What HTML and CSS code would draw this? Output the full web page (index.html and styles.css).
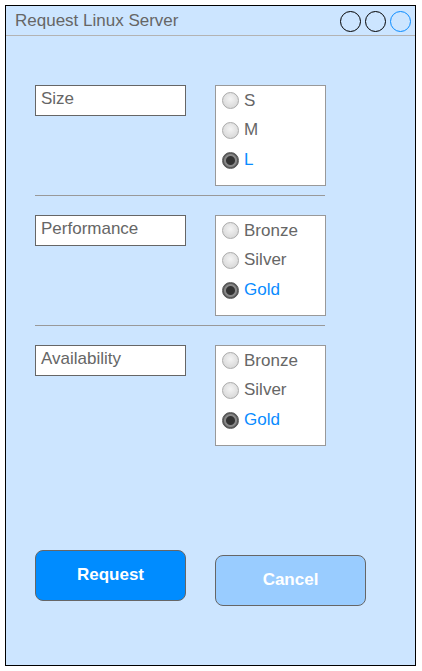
FILE: index.html
```html
<!DOCTYPE html>
<html lang="en">
<head>
	<meta charset="UTF-8">
	<title>Request Linux Server</title>
	<link rel="stylesheet" href="styles.css">
</head>
<body>
	<div class="frame">
		<header class="title-bar">
			<span class="title">Request Linux Server</span>
			<span class="controls">
				<i class="dot"></i><i class="dot"></i><i class="dot blue"></i>
			</span>
		</header>

		<main class="content">
			<section class="row">
				<div class="label">Size</div>
				<ul class="options">
					<li><i class="radio"></i>S</li>
					<li><i class="radio"></i>M</li>
					<li class="on"><i class="radio"></i>L</li>
				</ul>
			</section>
			<hr>
			<section class="row">
				<div class="label">Performance</div>
				<ul class="options">
					<li><i class="radio"></i>Bronze</li>
					<li><i class="radio"></i>Silver</li>
					<li class="on"><i class="radio"></i>Gold</li>
				</ul>
			</section>
			<hr>
			<section class="row">
				<div class="label">Availability</div>
				<ul class="options">
					<li><i class="radio"></i>Bronze</li>
					<li><i class="radio"></i>Silver</li>
					<li class="on"><i class="radio"></i>Gold</li>
				</ul>
			</section>

			<div class="buttons">
				<button class="btn primary">Request</button>
				<button class="btn secondary">Cancel</button>
			</div>
		</main>
	</div>
</body>
</html>
```

FILE: styles.css
```css
html, body {
	height: 100%;
}

body {
	margin: 0;
	padding: 5px;
	box-sizing: border-box;
	background: #fff;
	font: 17px "Liberation Sans", Arial, sans-serif;
}

.frame {
	width: 411px;
	height: 661px;
	box-sizing: border-box;
	border: 1px solid #000;
	background: #cce5ff;
}

.title-bar {
	display: flex;
	align-items: center;
	justify-content: space-between;
	height: 29px;
	padding: 0 4px 0 9px;
	border-bottom: 1px solid #b3b3b3;
}
.title {
	color: #666;
	padding-top: 1px;
}
.controls {
	display: flex;
	gap: 4px;
	padding-top: 1px;
}
.dot {
	width: 19px;
	height: 19px;
	border: 1px solid #000;
	border-radius: 50%;
}
.dot.blue {
	border-color: #0a8cff;
}

.content {
	padding: 49px 0 0 29px;
}

.row {
	display: flex;
	align-items: flex-start;
	gap: 29px;
	height: 101px;
}

.label {
	width: 151px;
	height: 31px;
	box-sizing: border-box;
	padding: 3px 0 0 5px;
	border: 1px solid #666;
	background: #fff;
	color: #666;
}

.options {
	width: 111px;
	height: 101px;
	box-sizing: border-box;
	margin: 0;
	padding: 0;
	list-style: none;
	border: 1px solid #999;
	background: #fff;
}
.options li {
	display: flex;
	align-items: center;
	gap: 5px;
	height: 30px;
	padding-left: 6px;
	color: #666;
}
.options li:first-child {
	height: 29px;
}
.options li.on {
	color: #0a8cff;
}

.radio {
	width: 15px;
	height: 15px;
	border: 1px solid #aaa;
	border-radius: 50%;
	background: radial-gradient(circle at 50% 40%, #f4f4f4, #d0d0d0);
}
.on .radio {
	border-color: #555;
	background: radial-gradient(circle, #333 0 4px, #888 5px 6px, #5a5a5a 7px);
}

hr {
	width: 290px;
	margin: 9px 0 19px 0;
	border: 0;
	border-top: 1px solid #999;
}

.buttons {
	display: flex;
	align-items: flex-start;
	gap: 29px;
	margin-top: 104px;
}
.btn {
	width: 151px;
	height: 51px;
	border: 1px solid #666;
	border-radius: 8px;
	color: #fff;
	font: bold 17px "Liberation Sans", Arial, sans-serif;
}
.primary {
	background: #008cff;
	padding-bottom: 2px;
}
.secondary {
	margin-top: 5px;
	background: #99ccff;
	padding-bottom: 3px;
}
```
